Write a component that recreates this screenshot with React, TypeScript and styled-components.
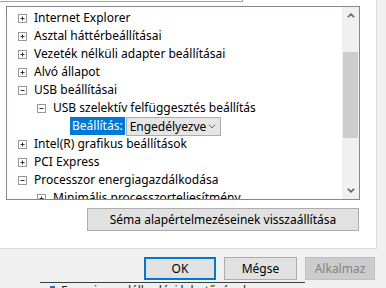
import React from 'react';
import styled, { createGlobalStyle } from 'styled-components';

const GlobalStyle = createGlobalStyle`
  html, body {
    margin: 0;
    padding: 0;
    background: #f0f0f0;
    overflow: hidden;
  }
  body {
    font-family: "Noto Sans", "Open Sans", sans-serif;
    font-size: 12px;
    color: #000;
  }
`;

const Window = styled.div`
  width: 386px;
  height: 288px;
  background: #f0f0f0;
  overflow: hidden;
  display: flex;
  flex-direction: column;
`;

const Page = styled.div`
  width: 377px;
  height: 249px;
  box-sizing: border-box;
  background: #fff;
  border-right: 1px solid #d9d9d9;
  border-bottom: 1px solid #d9d9d9;
  display: flex;
  flex-direction: column;
`;

const TopStub = styled.div`
  width: 243px;
  height: 2px;
  box-sizing: border-box;
  border-bottom: 1px solid #a0a0a0;
  border-right: 1px solid #a0a0a0;
`;

const ListBox = styled.div`
  margin: 4px 0 0 6px;
  width: 354px;
  height: 194px;
  box-sizing: border-box;
  border: 1px solid #828790;
  display: flex;
`;

const Tree = styled.div`
  flex: 1;
  overflow: hidden;
  padding-top: 2px;
`;

const Row = styled.div<{ $level: number }>`
  height: 18px;
  display: flex;
  align-items: center;
  padding-left: ${p => 11 + p.$level * 19}px;
  white-space: nowrap;
`;

const Expander = styled.svg`
  width: 9px;
  height: 9px;
  flex: none;
  margin-right: 7px;
`;

const Label = styled.span`
  line-height: 18px;
`;

const SettingRow = styled.div`
  height: 18px;
  display: flex;
  align-items: center;
  padding-left: 63px;
  white-space: nowrap;
`;

const Highlight = styled.span`
  background: #0078d7;
  color: #fff;
  height: 18px;
  line-height: 18px;
  padding: 0 2px;
`;

const Combo = styled.div`
  height: 19px;
  width: 95px;
  box-sizing: border-box;
  border: 1px solid #adadad;
  background: #e5e5e5;
  display: flex;
  align-items: center;
  justify-content: space-between;
  padding: 0 4px 0 3px;
  margin-left: 1px;
`;

const ScrollBar = styled.div`
  width: 17px;
  background: #f0f0f0;
  display: flex;
  flex-direction: column;
`;

const ArrowButton = styled.div`
  height: 17px;
  display: flex;
  align-items: center;
  justify-content: center;
`;

const Track = styled.div`
  flex: 1;
  padding-top: 28px;
`;

const Thumb = styled.div`
  margin: 0 1px;
  height: 86px;
  background: #cdcdcd;
`;

const ResetRow = styled.div`
  display: flex;
  padding-left: 87px;
  margin-top: 8px;
`;

const Button = styled.button<{ $width: number; $default?: boolean }>`
  width: ${p => p.$width}px;
  height: 23px;
  box-sizing: border-box;
  margin: 0;
  padding: 0;
  font-family: "Noto Sans", "Open Sans", sans-serif;
  font-size: 12px;
  color: #000;
  background: #e1e1e1;
  border: ${p => (p.$default ? '2px solid #0078d7' : '1px solid #adadad')};
  &:disabled {
    background: #cccccc;
    border-color: #bfbfbf;
    color: #838383;
  }
`;

const Footer = styled.div`
  display: flex;
  gap: 8px;
  padding: 8px 0 0 144px;
  height: 33px;
  box-sizing: border-box;
`;

const Behind = styled.div`
  flex: 1;
  overflow: hidden;
  border-top: 1px solid #3c3c3c;
  margin: 0 81px 0 40px;
  background: #f0f0f0;
  display: flex;
  align-items: flex-start;
  gap: 6px;
  padding: 1px 0 0 10px;
`;

const BehindIcon = styled.span`
  width: 5px;
  height: 5px;
  margin-top: 2px;
  background: #2a6fb8;
  flex: none;
`;

const BehindText = styled.span`
  font-size: 12px;
  line-height: 14px;
  color: #222;
  white-space: nowrap;
`;

const PlusMinus = ({ open }: { open: boolean }) => (
  <Expander viewBox="0 0 9 9">
    <rect x="0.5" y="0.5" width="8" height="8" fill="#fff" stroke="#999" />
    <path d="M2.5 4.5h4" stroke="#333" />
    {!open && <path d="M4.5 2.5v4" stroke="#333" />}
  </Expander>
);

const Chevron = ({ up, color, bold = true }: { up?: boolean; color: string; bold?: boolean }) => (
  <svg width="8" height="5" viewBox="0 0 8 5">
    <path
      d={up ? 'M0.8 4.3L4 1.2L7.2 4.3' : 'M0.8 0.7L4 3.8L7.2 0.7'}
      fill="none"
      stroke={color}
      strokeWidth={bold ? 1.6 : 1}
    />
  </svg>
);

type Item = { label: string; level: number; open: boolean };

const before: Item[] = [
  { label: 'Internet Explorer', level: 0, open: false },
  { label: 'Asztal háttérbeállításai', level: 0, open: false },
  { label: 'Vezeték nélküli adapter beállításai', level: 0, open: false },
  { label: 'Alvó állapot', level: 0, open: false },
  { label: 'USB beállításai', level: 0, open: true },
  { label: 'USB szelektív felfüggesztés beállítás', level: 1, open: true },
];

const after: Item[] = [
  { label: 'Intel(R) grafikus beállítások', level: 0, open: false },
  { label: 'PCI Express', level: 0, open: false },
  { label: 'Processzor energiagazdálkodása', level: 0, open: true },
  { label: 'Minimális processzorteljesítmény', level: 1, open: false },
];

const TreeRow = ({ item }: { item: Item }) => (
  <Row $level={item.level}>
    <PlusMinus open={item.open} />
    <Label>{item.label}</Label>
  </Row>
);

export default function App() {
  return (
    <Window>
      <GlobalStyle />
      <Page>
        <TopStub />
        <ListBox>
          <Tree>
            {before.map(item => (
              <TreeRow key={item.label} item={item} />
            ))}
            <SettingRow>
              <Highlight>Beállítás:</Highlight>
              <Combo>
                <span>Engedélyezve</span>
                <Chevron color="#666" bold={false} />
              </Combo>
            </SettingRow>
            {after.map(item => (
              <TreeRow key={item.label} item={item} />
            ))}
          </Tree>
          <ScrollBar>
            <ArrowButton>
              <Chevron up color="#606060" />
            </ArrowButton>
            <Track>
              <Thumb />
            </Track>
            <ArrowButton>
              <Chevron color="#606060" />
            </ArrowButton>
          </ScrollBar>
        </ListBox>
        <ResetRow>
          <Button $width={272}>Séma alapértelmezéseinek visszaállítása</Button>
        </ResetRow>
      </Page>
      <Footer>
        <Button $width={72} $default>
          OK
        </Button>
        <Button $width={73}>Mégse</Button>
        <Button $width={70} disabled>
          Alkalmaz
        </Button>
      </Footer>
      <Behind>
        <BehindIcon />
        <BehindText>Energiagazdálkodási lehetőségek</BehindText>
      </Behind>
    </Window>
  );
}
